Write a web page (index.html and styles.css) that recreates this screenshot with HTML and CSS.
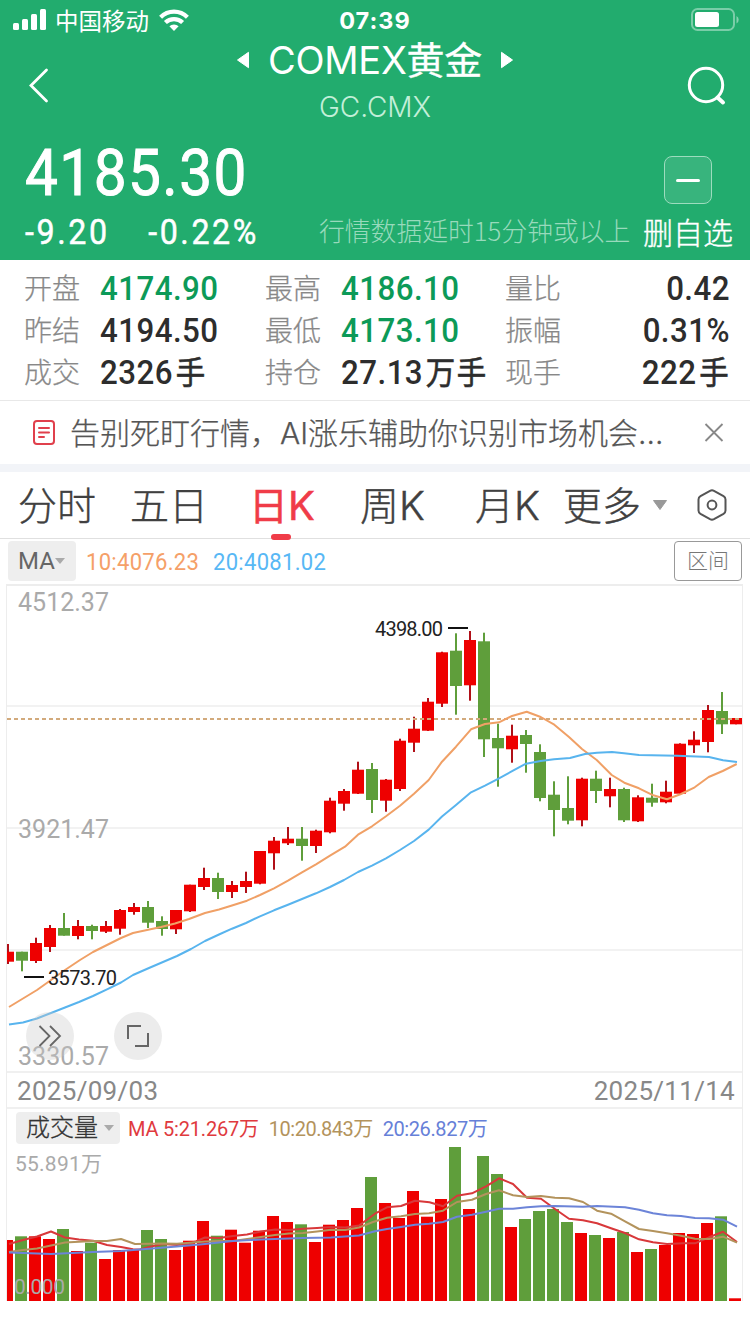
FILE: index.html
```html
<!DOCTYPE html>
<html lang="zh-CN">
<head>
    <meta charset="UTF-8">
    <meta name="viewport" content="width=device-width, initial-scale=1.0">
    <title>COMEX黄金</title>
    <link rel="stylesheet" href="styles.css">
    <script src="kline.js" defer></script>
</head>
<body>
    <!-- 顶部行情 -->
    <header class="header">
        <div class="status">
            <div class="status-left">
                <svg class="signal" width="34" height="22" viewBox="0 0 34 22" fill="#fff">
                    <rect x="0" y="14" width="6" height="7" rx="1.5"/>
                    <rect x="9" y="10" width="6" height="11" rx="1.5"/>
                    <rect x="18" y="5" width="6" height="16" rx="1.5"/>
                    <rect x="27" y="0" width="6" height="21" rx="1.5"/>
                </svg>
                <span class="carrier">中国移动</span>
                <svg class="wifi" width="30" height="22" viewBox="0 0 30 22" fill="none" stroke="#fff" stroke-width="4.2">
                    <path d="M1.6 8.2a19 19 0 0 1 26.8 0"/>
                    <path d="M6.4 13.6a12.2 12.2 0 0 1 17.2 0"/>
                    <path d="M15 22l-4.6-4.7a6.6 6.6 0 0 1 9.2 0z" fill="#fff" stroke="none"/>
                </svg>
            </div>
            <div class="clock">07:39</div>
            <svg class="battery" width="50" height="24" viewBox="0 0 50 24">
                <rect x="1" y="1" width="42" height="21" rx="5.5" fill="none" stroke="#fff" stroke-opacity=".4" stroke-width="2"/>
                <rect x="4" y="4" width="24" height="15" rx="2.5" fill="#fff"/>
                <path d="M45.5 8v7.5q2.2-.8 2.2-3.7t-2.2-3.8z" fill="#fff" fill-opacity=".45"/>
            </svg>
        </div>
        <div class="nav">
            <svg class="back" width="22" height="36" viewBox="0 0 22 36" fill="none" stroke="#fff" stroke-width="2.8">
                <path d="M18.5 3L3 18.5 18.5 34" stroke-linecap="round"/>
            </svg>
            <div class="title-box">
                <div class="title">
                    <svg width="14" height="18" viewBox="0 0 14 18" fill="#fff"><path d="M1.5 9L12.5 1.3v15.4z" stroke="#fff" stroke-linejoin="round"/></svg>
                    <span>COMEX<em>黄金</em></span>
                    <svg width="14" height="18" viewBox="0 0 14 18" fill="#fff"><path d="M12.5 9L1.5 1.3v15.4z" stroke="#fff" stroke-linejoin="round"/></svg>
                </div>
                <div class="code">GC.CMX</div>
            </div>
            <svg class="search" width="40" height="40" viewBox="0 0 40 40" fill="none" stroke="#fff" stroke-width="3">
                <circle cx="19" cy="19" r="16.7"/>
                <path d="M30.5 31.5l5.5 5" stroke-width="4" stroke-linecap="round"/>
            </svg>
        </div>
        <div class="quote">
            <div class="price-box">
                <div class="price">4185.30</div>
                <div class="change"><span>-9.20</span><span>-0.22%</span></div>
            </div>
            <div class="delay">行情数据延时15分钟或以上</div>
            <div class="fav">
                <div class="fav-btn"><i></i></div>
                <div class="fav-text">删自选</div>
            </div>
        </div>
    </header>

    <!-- 盘口数据 -->
    <div class="stats">
        <span class="name">开盘</span><b class="green">4174.90</b>
        <span class="name">最高</span><b class="green">4186.10</b>
        <span class="name">量比</span><b class="right">0.42</b>
        <span class="name">昨结</span><b>4194.50</b>
        <span class="name">最低</span><b class="green">4173.10</b>
        <span class="name">振幅</span><b class="right">0.31%</b>
        <span class="name">成交</span><b>2326<em>手</em></b>
        <span class="name">持仓</span><b>27.13<em>万手</em></b>
        <span class="name">现手</span><b class="right">222<em>手</em></b>
    </div>

    <div class="notice">
        <svg width="24" height="26" viewBox="0 0 24 26" fill="none" stroke="#e0404c" stroke-width="2">
            <rect x="2" y="1" width="20" height="23" rx="3"/>
            <path d="M7 8h10M7 12.5h10M7 17h5" stroke-linecap="round"/>
        </svg>
        <p class="notice-text">告别死盯行情，AI涨乐辅助你识别市场机会...</p>
        <svg width="20" height="20" viewBox="0 0 20 20" fill="none" stroke="#888" stroke-width="1.8"><path d="M1.5 1l17 17M18.5 1l-17 17"/></svg>
    </div>

    <!-- 周期切换 -->
    <nav class="tabs">
        <span class="tab">分时</span>
        <span class="tab">五日</span>
        <span class="tab"><span class="active">日<i>K</i></span></span>
        <span class="tab">周<i>K</i></span>
        <span class="tab">月<i>K</i></span>
        <span class="tab">更多</span>
        <svg class="arrow" width="14" height="10" viewBox="0 0 14 10" fill="#999"><path d="M.5.5h13L7 9.5z" stroke="#999" stroke-linejoin="round"/></svg>
        <svg class="setting" width="30" height="32" viewBox="0 0 30 32" fill="none" stroke="#555" stroke-width="2">
            <path d="M13 1.8q2-1 4 0l9.5 5.4q2 1.2 2 3.3v11q0 2.1-2 3.3L17 30.2q-2 1-4 0l-9.5-5.4q-2-1.2-2-3.3v-11q0-2.1 2-3.3z"/>
            <circle cx="15" cy="16" r="4.4"/>
        </svg>
    </nav>

    <div class="ma-bar">
        <div class="select">MA<svg width="10" height="6" viewBox="0 0 10 6" fill="#aaa"><path d="M0 0h10L5 6z"/></svg></div>
        <span class="ma10">10:4076.23</span>
        <span class="ma20">20:4081.02</span>
        <div class="range">区间</div>
    </div>

    <main class="chart">
        <div class="kline-box">
            <svg id="kline" class="kline" width="735" height="485" viewBox="7 586 735 485"></svg>
            <div class="tools">
                <div class="tool">
                    <svg width="24" height="24" viewBox="0 0 24 24" fill="none" stroke="#666" stroke-width="1.8"><path d="M1.5 2l10 10-10 10M12 2l10 10-10 10"/></svg>
                </div>
                <div class="tool">
                    <svg width="24" height="24" viewBox="0 0 24 24" fill="none" stroke="#666" stroke-width="2"><path d="M2 15V2h13M22 9v13H9"/></svg>
                </div>
            </div>
        </div>
        <div class="dates"><span>2025/09/03</span><span>2025/11/14</span></div>
        <div class="vol-bar">
            <div class="select"><span>成交量</span><svg width="10" height="6" viewBox="0 0 10 6" fill="#aaa"><path d="M0 0h10L5 6z"/></svg></div>
            <span class="vma5">MA 5:21.267<em>万</em></span>
            <span class="vma10">10:20.843<em>万</em></span>
            <span class="vma20">20:26.827<em>万</em></span>
        </div>
        <svg id="volume" class="volume" width="735" height="155" viewBox="7 1146 735 155"></svg>
    </main>
</body>
</html>
```
FILE: styles.css
```css
*{
    margin: 0;
    padding: 0;
    box-sizing: border-box;
}
body{
    width: 750px;
    height: 1334px;
    overflow: hidden;
    background-color: #fff;
    color: #333;
    font-family: Roboto, "Noto Sans CJK SC", sans-serif;
}
svg{
    display: block;
    flex: none;
}
em, i{
    font-style: normal;
}
span, b, div{
    white-space: nowrap;
}

/* 顶部 */
.header{
    height: 260px;
    background-color: #22ac6e;
    color: #fff;
}
.status{
    display: grid;
    grid-template-columns: 1fr auto 1fr;
    height: 40px;
    padding: 0 9px 0 13px;
    align-items: center;
}
.status-left{
    display: flex;
    align-items: center;
}
.carrier{
    margin: -1px 10px 0 8px;
    font: 400 23.5px/30px "Noto Sans CJK SC", sans-serif;
}
.clock{
    margin: 1px 4px 0 0;
    font: 700 23.5px/30px Inter, sans-serif;
    letter-spacing: 1px;
}
.battery{
    justify-self: end;
}
.nav{
    display: grid;
    grid-template-columns: 1fr auto 1fr;
    height: 90px;
    padding: 0 23px 0 23px;
}
.back{
    margin: 27px 0 0 5px;
}
.search{
    margin-top: 26px;
    justify-self: end;
}
.title-box{
    text-align: center;
}
.title{
    display: flex;
    align-items: center;
    gap: 18px;
    height: 40px;
    font: 400 38px/40px Inter, "Noto Sans CJK SC", sans-serif;
    letter-spacing: -.3px;
}
.title em{
    -webkit-text-stroke: .3px #fff;
}
.code{
    margin-top: 11px;
    font: 300 28px/32px Inter, sans-serif;
    color: #c3efd9;
}
.quote{
    display: flex;
    height: 130px;
    padding: 0 17px 0 25px;
}
.price-box{
    width: 294px;
}
/* 数字压窄一点，间距加大 */
.price{
    margin-top: 8px;
    font-weight: 400;
    font-size: 65px;
    line-height: 70px;
    letter-spacing: 1.6px;
    -webkit-text-stroke: 1px #fff;
    transform: scaleX(.9);
    transform-origin: left;
}
.change{
    display: flex;
    gap: 42px;
    margin-top: 6px;
    font-weight: 400;
    font-size: 35px;
    line-height: 38px;
    letter-spacing: 2.8px;
    -webkit-text-stroke: .5px #fff;
    transform: scaleX(.92);
    transform-origin: left;
}
.delay{
    width: 324px;
    margin-top: 80px;
    font: 300 25.8px/40px "Noto Sans CJK SC", sans-serif;
    color: #98dabc;
}
.fav{
    display: flex;
    flex-direction: column;
    align-items: center;
}
.fav-btn{
    display: flex;
    align-items: center;
    justify-content: center;
    width: 48px;
    height: 48px;
    margin-top: 26px;
    border: 1px solid #9ddcbe;
    border-radius: 8px;
    background-color: #38b47d;
}
.fav-btn i{
    width: 24px;
    height: 3px;
    border-radius: 2px;
    background-color: #fff;
}
.fav-text{
    margin-top: 7px;
    font: 300 30px/40px "Noto Sans CJK SC", sans-serif;
    -webkit-text-stroke: .4px #fff;
}

/* 盘口 */
.stats{
    display: grid;
    grid-template-columns: 76px 165px 76px 164px 76px 149px;
    grid-auto-rows: 42px;
    height: 141px;
    padding: 7px 20px 0 24px;
    border-bottom: 1px solid #e8e8e8;
    line-height: 42px;
}
.stats .name{
    font: 300 28px/40px "Noto Sans CJK SC", sans-serif;
    color: #888;
    -webkit-text-stroke: .25px #888;
}
.stats b{
    font-weight: 500;
    font-size: 34px;
    letter-spacing: .5px;
    color: #2d2d2d;
    transform: scaleX(.92);
    transform-origin: left;
}
.stats em{
    display: inline-block;
    margin-left: 3px;
    font: 400 32px/38px "Noto Sans CJK SC", sans-serif;
    letter-spacing: 1.5px;
    -webkit-text-stroke: .6px #2d2d2d;
}
.stats .green{
    color: #0c9a58;
}
.stats .right{
    text-align: right;
    transform-origin: right;
}

/* 提示条 */
.notice{
    display: flex;
    align-items: center;
    height: 71px;
    padding: 0 26px 0 32px;
    border-bottom: 8px solid #f2f4f8;
}
.notice-text{
    flex: 1;
    margin: 0 0 0 14px;
    font: 300 30px/40px Inter, "Noto Sans CJK SC", sans-serif;
    color: #555;
    -webkit-text-stroke: .25px #555;
}

/* 周期 */
.tabs{
    display: grid;
    grid-template-columns: 112px 119px 111px 115px 88px 90px 44px 30px;
    align-items: center;
    height: 67px;
    padding-left: 18px;
    border-bottom: 1px solid #e0e0e0;
}
.tab{
    margin-top: -5px;
    font: 300 39px/66px "Noto Sans CJK SC", sans-serif;
    color: #404040;
    -webkit-text-stroke: .4px #404040;
}
.tab i{
    font: 300 40px/40px Inter, sans-serif;
}
.active{
    position: relative;
    display: inline-block;
    font-weight: 400;
    color: #f03c48;
    -webkit-text-stroke: .5px #f03c48;
}
.active i{
    font-weight: 400;
}
.active::after{
    content: "";
    position: absolute;
    left: 22px;
    bottom: -4px;
    width: 20px;
    height: 6px;
    border-radius: 3px;
    background-color: #f03c48;
}
.ma-bar{
    display: flex;
    align-items: center;
    height: 45px;
    padding: 0 8px 1px;
    font-size: 24px;
}
.select{
    display: flex;
    align-items: center;
    border-radius: 4px;
    background-color: #eee;
}
.ma-bar .select{
    width: 68px;
    height: 40px;
    padding-left: 10px;
    color: #666;
}
.ma10, .ma20{
    margin-top: 2px;
    letter-spacing: .3px;
    transform: scaleX(.92);
    transform-origin: left;
}
.ma10{
    margin-left: 10px;
    color: #f5a068;
}
.ma20{
    margin-left: 4px;
    color: #58b8f5;
}
.range{
    width: 68px;
    height: 40px;
    margin-left: auto;
    border: 1px solid #999;
    border-radius: 4px;
    text-align: center;
    font: 300 21px/35px "Noto Sans CJK SC", sans-serif;
    color: #777;
}

/* 图表 */
.chart{
    width: 737px;
    margin: 0 0 0 6px;
    border: solid #ededed;
    border-width: 2px 1px 0;
}
.kline-box{
    position: relative;
}
.tools{
    position: absolute;
    left: 19px;
    bottom: 11px;
    display: flex;
    gap: 40px;
}
.tool{
    display: flex;
    align-items: center;
    justify-content: center;
    width: 48px;
    height: 48px;
    border-radius: 50%;
    background-color: rgba(200, 200, 200, .35);
}
.dates{
    display: flex;
    justify-content: space-between;
    height: 38px;
    padding: 0 7px 0 10px;
    border: solid #f0f0f0;
    border-width: 2px 0;
    font-size: 26px;
    line-height: 37px;
    letter-spacing: .3px;
    color: #888;
}
.vol-bar{
    display: flex;
    align-items: center;
    height: 37px;
    padding-left: 9px;
    font-size: 20px;
    line-height: 32px;
}
.vol-bar .select{
    width: 104px;
    height: 32px;
    padding-left: 10px;
    gap: 6px;
}
.select span{
    margin-top: -3px;
    font: 300 24px/30px "Noto Sans CJK SC", sans-serif;
    -webkit-text-stroke: .3px #333;
}
.vma5{
    margin: 2px 0 0 8px;
    letter-spacing: -.2px;
    color: #e03a3e;
}
.vma10{
    margin: 2px 0 0 10px;
    letter-spacing: -.5px;
    color: #b3935c;
}
.vma20{
    margin: 2px 0 0 10px;
    letter-spacing: -.4px;
    color: #6680d8;
}
.axis{
    font: 400 25px Roboto, "Noto Sans CJK SC", sans-serif;
    fill: #aaa;
}
.axis.small{
    font-size: 21px;
}
.mark{
    font: 400 20px Roboto, sans-serif;
    fill: #222;
}
.grid{
    stroke: #f2f2f2;
    stroke-width: 2;
}
.up{
    fill: #ee0000;
}
.down{
    fill: #5f9e3b;
}
.wick-up{
    fill: #b01018;
}
.wick-down{
    fill: #5f9e3b;
}
.line{
    fill: none;
    stroke-width: 2;
    stroke-linejoin: round;
}
.now{
    stroke: #d2aa7c;
    stroke-width: 2;
    stroke-dasharray: 4 3;
}
```
FILE: kline.js
```js
//每根K线：[涨1跌0, 实体上, 实体下, 最高, 最低, 成交量柱顶]
var data=[
    [1,951.7,961.7,944,964,1240],[0,951.7,960.7,951.7,971.3,1236.3],[1,943,961,937.7,963,1236.3],
    [1,928,947,925,952,1239],[0,928,935.7,913,935.7,1229],[1,926,936,920,939.3,1251],
    [0,926,931,924.7,939.3,1242.7],[1,926,931.7,921,933,1259],[1,910,928.7,909,934.7,1250],
    [1,907,912,903,914.7,1250],[0,907,922.7,901,928,1230],[0,921,929,916.3,935.7,1239],
    [1,910,929.3,910,934,1250],[1,884.7,911.3,884.7,912,1240.7],[1,878,887,867.7,890,1221],
    [0,878,892,872.7,899,1235.7],[1,885,892,881,898,1229.7],[1,881,887,871.7,893,1242.7],
    [1,851,883.7,851,884.3,1230.7],[1,840.7,853.3,837,869.7,1216],[1,838.7,843.3,827,845,1222],
    [0,838.7,846,827,860.7,1224.3],[1,830.7,846,829.7,853,1242],[1,800.7,832.3,797.7,833.3,1224.7],
    [1,791,803.7,789,810.7,1220],[1,769.7,793.7,761.7,794,1208],[0,769,800,763,813,1177],
    [1,779.7,800.7,779,811.7,1203],[1,740.7,789,738.7,791,1218],[1,728.7,742.7,716.7,752,1191],
    [1,701.7,730.7,698,731,1216.7],[1,652.3,703.7,651.7,707,1199],[0,650.7,686,633.3,714.7,1147],
    [1,640,685.3,631,700.7,1209],[0,641.3,739.3,632.7,757,1156],[0,738,748.3,723.7,786.7,1174],
    [1,735.7,749.3,724.7,762.7,1227],[0,735,744,730,772.7,1219],[0,752,798,744.3,801.3,1211],
    [0,794.7,810,781.3,836.3,1209],[0,808,820.7,776.3,824.3,1222],[1,778.7,820.3,777.7,826.3,1233],
    [0,778.7,791,770.7,803,1235],[1,789,796.3,777.7,807.3,1238],[0,789,820.3,787.7,822,1232],
    [1,797.3,821.3,795.3,822,1252],[0,797.7,802.7,783.7,806.7,1249],[1,791.7,802.3,780.7,803.3,1245],
    [1,743.7,793.7,743.3,794.3,1233],[1,739.7,745.3,731.3,753,1234],[1,710,742,705,752.3,1223],
    [0,711,724.3,692,734,1216.3],[1,718,724.3,718,724.3,1298.3]
];

//均线
var ma10="9,1007 37,990 65,970 80,960 93,952 107,945 121,938 133,933 147,930 161,927 175,923.5 189,919 205,913 219,909.5 232,905.5 247,900.7 260,895 274,888.3 288,880.7 302,872.3 316,864.3 330,855.7 345,846.7 358,834.7 372,826.3 386,816.3 400,805.7 414,793.7 428.7,780 442,761.7 456,746.7 471,729.3 485,724 499,722.3 512,716 526.7,711.7 540.7,717 554.3,724.7 569,737 582,749 596.7,760 611.7,775 624.3,782.7 639,788.3 653.3,795.3 667,799.3 681,794 694.7,787.3 708.7,777 722.7,771 736.7,764";
var ma20="9,1024.5 23,1022.5 37,1018.5 51,1013 65,1007.5 79,1002 93,996 107,989.3 121,982.5 133,975 149,968 163,962 177,956 191,949 205,941 219,934.5 232,928.7 246,923 260,916.3 274,910.3 288,904.7 302,899 316,893.3 330,887 344,880 358,872 372,865.7 386,858.3 400,850 414,841 428.7,829.6 442,816.5 456,805 471,792.3 485,785.7 499,778.3 513,770.7 526,763.7 540.7,761 554,759.3 570,758 585,754 597,752.7 612,752 624,753.3 639,755 677,755.7 709,757 723,760.3 737,762";
var vma5="9,1244 23,1240 37,1236.5 51,1231.5 65,1237.5 79,1239.5 93,1240.7 107,1245 121,1247 133,1249.3 140,1249.5 149,1247 163,1244 177,1245 191,1243.5 205,1237.5 219,1238 233,1236 247,1234.5 261,1231.5 275,1229.5 289,1230 303,1228.7 317,1228 331,1227 345,1227.5 359,1225.5 375,1213.7 387,1207.3 401,1206 415,1200.7 429.5,1202.3 443,1206.3 457,1195.7 472,1193.3 486,1186.3 499,1178.3 513,1184 527,1197.7 541,1198.7 555,1209 569,1218.7 583,1220.3 597,1223.3 611,1228.3 625,1233 639,1239.3 653,1242.3 667,1244 683,1243.3 695,1243.3 709,1237.3 723,1231.7 737,1242";
var vma10="9,1252 23,1250 37,1248.5 65,1242.5 93,1241 107,1241 121,1239 135,1244 163,1243.5 177,1243.7 205,1241.5 219,1241 233,1241 261,1237 275,1235 289,1233.5 303,1233 317,1231.5 331,1229.7 345,1230 359,1227.5 373,1222 387,1217.7 401,1216.3 415,1214 429,1213.3 443,1210.7 457,1202 472,1199.7 486,1194 499,1190.3 513,1195.3 527,1197 541,1196 555,1197.7 569,1198.3 583,1202 597,1210.7 611,1213.7 625,1221.3 639,1229 653,1231 667,1233.3 681,1235.7 695,1238.7 709,1239 723,1236.7 737,1242.7";
var vma20="9,1252.5 51,1254 93,1252 121,1251 149,1248.7 177,1246.5 205,1244 233,1241 261,1239.5 275,1239 303,1238 331,1237.5 359,1235.5 375,1231.3 387,1229 401,1227 415,1224.7 429,1223.7 443,1222 457,1216.7 472,1214.7 486,1211.7 499,1208.7 513,1208.7 527,1207.3 541,1206.3 555,1206 583,1206.7 597,1206 625,1207.3 639,1209.7 653,1213.3 667,1215.3 681,1216 695,1218 709,1218.3 723,1219.7 737,1226.7";

function rect(cls,x,y,w,h){
    return '<rect class="'+cls+'" x="'+x+'" y="'+y+'" width="'+w+'" height="'+h+'"/>';
}
function line(points,color){
    return '<polyline class="line" stroke="'+color+'" points="'+points+'"/>';
}
function text(cls,x,y,str,len){
    return '<text class="'+cls+'" x="'+x+'" y="'+y+'" textLength="'+len+'">'+str+'</text>';
}

var k="";
var v="";
//网格线
[706,828,950].forEach(function(y){
    k+='<path class="grid" d="M7 '+y+'h735"/>';
});
k+=text("axis",18,611,"4512.37",91);
k+=text("axis",18,838,"3921.47",91);
k+=text("axis",18,1065,"3330.57",91);

for(var i=0;i<data.length;i++){
    var d=data[i];
    var cx=8+14*i;
    var cls=d[0]?"up":"down";
    k+=rect("wick-"+cls,cx-1,d[3],2,d[4]-d[3]);
    k+=rect(cls,cx-6,d[1],12,d[2]-d[1]);
    v+=rect(cls,cx-7,d[5],12,1301-d[5]);
}
k+='<path class="now" d="M7 719h735"/>';
k+=line(ma10,"#f0a066")+line(ma20,"#58b4ee");
//最高最低价标记
k+='<path d="M448 628h20M24 977h20" stroke="#111" stroke-width="2"/>';
k+=text("mark",375,636,"4398.00",68);
k+=text("mark",48,985,"3573.70",69);

v+=line(vma5,"#d8383a")+line(vma10,"#b3935c")+line(vma20,"#6c84d8");
v+=text("axis small",15,1171,"55.891万",87);
v+=text("axis small",14,1294,"0.000",51);

document.getElementById("kline").innerHTML=k;
document.getElementById("volume").innerHTML=v;
```
